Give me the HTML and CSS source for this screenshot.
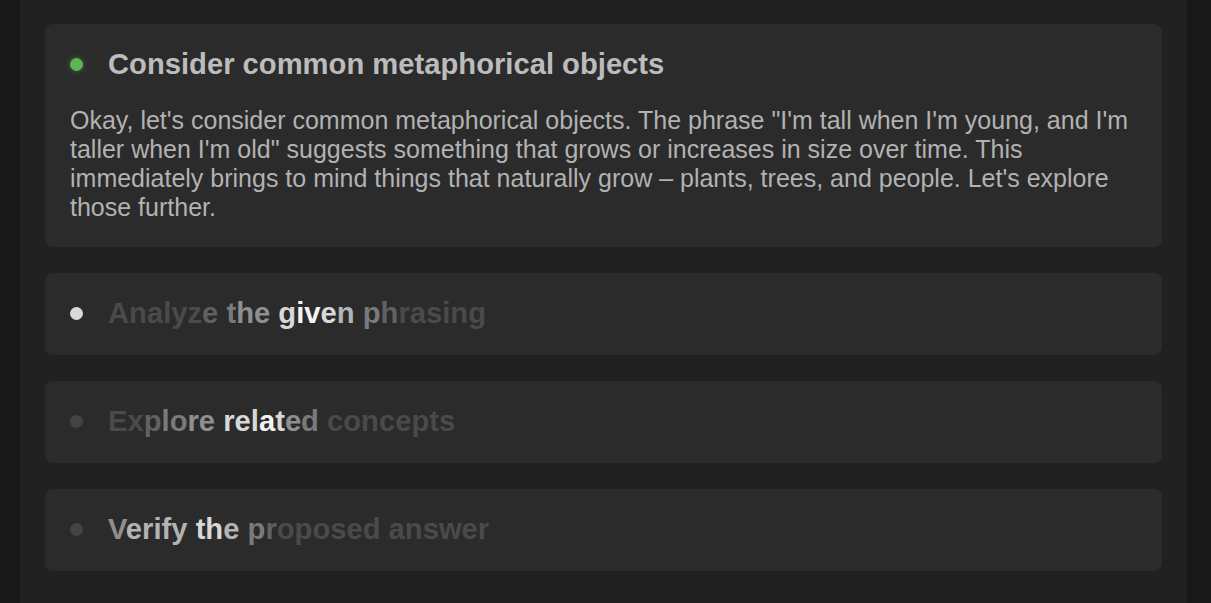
FILE: index.html
```html
<!DOCTYPE html>
<html lang="en">
<head>
<meta charset="utf-8">
<link rel="stylesheet" href="styles.css">
</head>
<body>
<div class="page">
  <div class="panel">
    <section class="step">
      <div class="step-head">
        <span class="dot dot-done"></span>
        <h3 class="step-title">Consider common metaphorical objects</h3>
      </div>
      <p class="step-body">Okay, let's consider common metaphorical objects. The phrase "I'm tall when I'm young, and I'm taller when I'm old" suggests something that grows or increases in size over time. This immediately brings to mind things that naturally grow – plants, trees, and people. Let's explore those further.</p>
    </section>

    <section class="step">
      <div class="step-head">
        <span class="dot dot-active"></span>
        <h3 class="step-title shimmer"><span class="s0">Analyz</span><span class="s1">e</span> <span class="s2">t</span><span class="s3">he</span> <span class="s5">g</span><span class="s6">iv</span><span class="s5">e</span><span class="s4">n</span> <span class="s2">p</span><span class="s1">h</span><span class="s0">rasing</span></h3>
      </div>
    </section>

    <section class="step">
      <div class="step-head">
        <span class="dot dot-pending"></span>
        <h3 class="step-title shimmer"><span class="s0">Ex</span><span class="s1">p</span><span class="s2">lo</span><span class="s3">re</span> <span class="s5">rel</span><span class="s6">a</span><span class="s5">t</span><span class="s3">e</span><span class="s2">d</span> <span class="s0">concepts</span></h3>
      </div>
    </section>

    <section class="step">
      <div class="step-head">
        <span class="dot dot-pending"></span>
        <h3 class="step-title shimmer"><span class="s3">V</span><span class="s4">erify</span> <span class="s5">th</span><span class="s4">e</span> <span class="s2">p</span><span class="s1">r</span><span class="s0">oposed answer</span></h3>
      </div>
    </section>
  </div>
</div>
</body>
</html>
```

FILE: styles.css
```css
html, body {
  margin: 0;
  padding: 0;
  background: #181818;
  font-family: "Liberation Sans", Arial, sans-serif;
}

.page {
  padding: 0 24px 0 20px;
  min-height: 603px;
  box-sizing: border-box;
}

.panel {
  background: #212121;
  min-height: 603px;
  box-sizing: border-box;
  padding: 24px 25px 30px;
  display: flex;
  flex-direction: column;
  gap: 26px;
}

.step {
  background: #2b2b2b;
  border-radius: 8px;
  padding: 24px 25px 26px;
}

.step-head {
  display: flex;
  align-items: center;
  gap: 25px;
  height: 32px;
}

.dot {
  width: 13px;
  height: 13px;
  border-radius: 50%;
  flex: none;
}

.dot-done {
  background: #5cb553;
  box-shadow: 0 0 6px rgba(92, 181, 83, 0.45);
}

.dot-active {
  background: #dadada;
}

.dot-pending {
  background: #444444;
}

.step-title {
  margin: 0;
  font-size: 29.2px;
  font-weight: 700;
  line-height: 32px;
  color: #bcbcbc;
  white-space: nowrap;
}

.step-body {
  margin: 26px 0 -1px;
  font-size: 25px;
  line-height: 29px;
  color: #b2b2b2;
}

.s0 { color: #4a4a4a; }
.s1 { color: #616161; }
.s2 { color: #7a7a7a; }
.s3 { color: #8f8f8f; }
.s4 { color: #b3b3b3; }
.s5 { color: #d8d8d8; }
.s6 { color: #f4f4f4; }
```
